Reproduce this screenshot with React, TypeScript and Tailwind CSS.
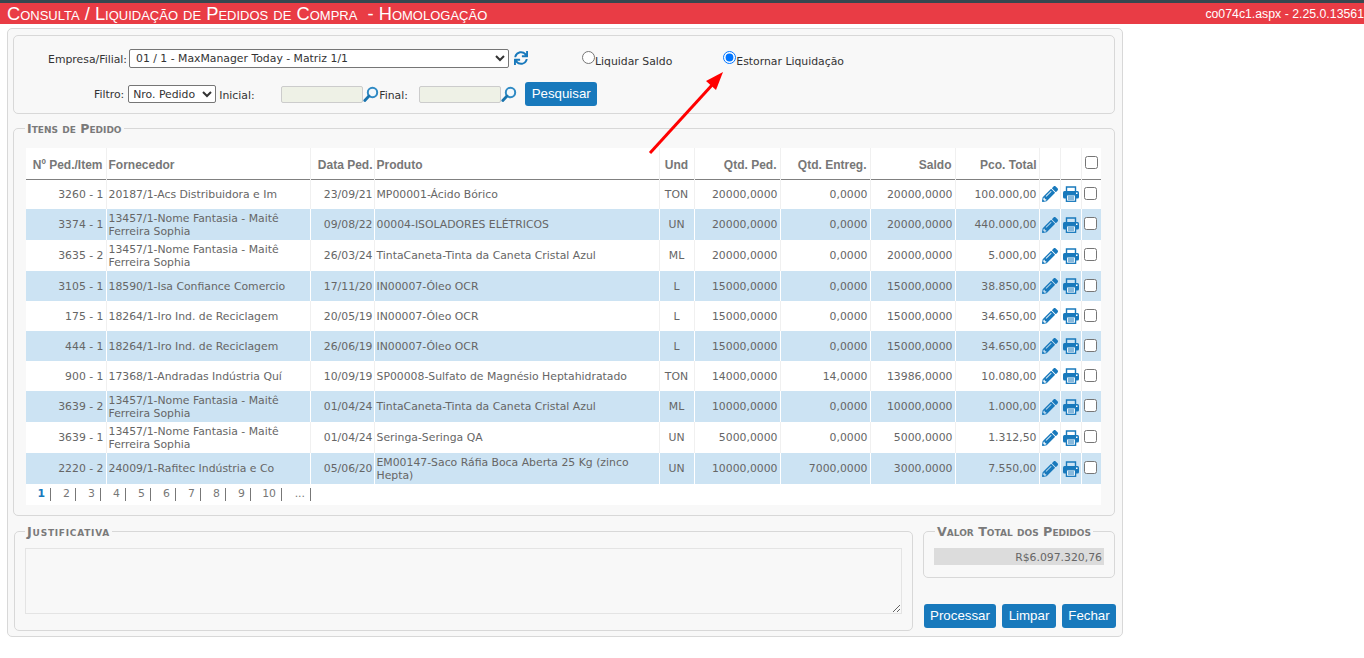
import type { ReactNode } from "react"
import { FaPencilAlt, FaSync } from "react-icons/fa"

// ---------------------------------------------------------------------------
// Data
// ---------------------------------------------------------------------------

interface Item {
  pedido: string
  fornecedor: string
  data: string
  produto: string
  und: string
  qtdPed: string
  qtdEnt: string
  saldo: string
  total: string
}

const NOME_FANTASIA = "13457/1-Nome Fantasia - Maitê Ferreira Sophia"

const ITEMS: Item[] = [
  { pedido: "3260 - 1", fornecedor: "20187/1-Acs Distribuidora e Im", data: "23/09/21", produto: "MP00001-Ácido Bórico", und: "TON", qtdPed: "20000,0000", qtdEnt: "0,0000", saldo: "20000,0000", total: "100.000,00" },
  { pedido: "3374 - 1", fornecedor: NOME_FANTASIA, data: "09/08/22", produto: "00004-ISOLADORES ELÉTRICOS", und: "UN", qtdPed: "20000,0000", qtdEnt: "0,0000", saldo: "20000,0000", total: "440.000,00" },
  { pedido: "3635 - 2", fornecedor: NOME_FANTASIA, data: "26/03/24", produto: "TintaCaneta-Tinta da Caneta Cristal Azul", und: "ML", qtdPed: "20000,0000", qtdEnt: "0,0000", saldo: "20000,0000", total: "5.000,00" },
  { pedido: "3105 - 1", fornecedor: "18590/1-Isa Confiance Comercio", data: "17/11/20", produto: "IN00007-Óleo OCR", und: "L", qtdPed: "15000,0000", qtdEnt: "0,0000", saldo: "15000,0000", total: "38.850,00" },
  { pedido: "175 - 1", fornecedor: "18264/1-Iro Ind. de Reciclagem", data: "20/05/19", produto: "IN00007-Óleo OCR", und: "L", qtdPed: "15000,0000", qtdEnt: "0,0000", saldo: "15000,0000", total: "34.650,00" },
  { pedido: "444 - 1", fornecedor: "18264/1-Iro Ind. de Reciclagem", data: "26/06/19", produto: "IN00007-Óleo OCR", und: "L", qtdPed: "15000,0000", qtdEnt: "0,0000", saldo: "15000,0000", total: "34.650,00" },
  { pedido: "900 - 1", fornecedor: "17368/1-Andradas Indústria Quí", data: "10/09/19", produto: "SP00008-Sulfato de Magnésio Heptahidratado", und: "TON", qtdPed: "14000,0000", qtdEnt: "14,0000", saldo: "13986,0000", total: "10.080,00" },
  { pedido: "3639 - 2", fornecedor: NOME_FANTASIA, data: "01/04/24", produto: "TintaCaneta-Tinta da Caneta Cristal Azul", und: "ML", qtdPed: "10000,0000", qtdEnt: "0,0000", saldo: "10000,0000", total: "1.000,00" },
  { pedido: "3639 - 1", fornecedor: NOME_FANTASIA, data: "01/04/24", produto: "Seringa-Seringa QA", und: "UN", qtdPed: "5000,0000", qtdEnt: "0,0000", saldo: "5000,0000", total: "1.312,50" },
  { pedido: "2220 - 2", fornecedor: "24009/1-Rafitec Indústria e Co", data: "05/06/20", produto: "EM00147-Saco Ráfia Boca Aberta 25 Kg (zinco Hepta)", und: "UN", qtdPed: "10000,0000", qtdEnt: "7000,0000", saldo: "3000,0000", total: "7.550,00" },
]

const PAGES = ["1", "2", "3", "4", "5", "6", "7", "8", "9", "10", "..."]

// ---------------------------------------------------------------------------
// Small parts
// ---------------------------------------------------------------------------

function Lens() {
  return (
    <svg width="16" height="17" viewBox="0 0 16 17" className="shrink-0">
      <circle cx="9.5" cy="6.5" r="4.7" fill="#f2f8fc" stroke="#2f8ac4" strokeWidth="2" />
      <path d="M6 10 L1.8 14.5" stroke="#1873ad" strokeWidth="2.8" strokeLinecap="round" />
    </svg>
  )
}

function PrintIcon() {
  return (
    <svg width="16" height="16" viewBox="0 0 16 16" className="mx-auto block">
      <path d="M3.5 5.5 V1 H12.5 V5.5" fill="none" stroke="#1879bc" strokeWidth="1.4" />
      <rect x="0" y="5" width="16" height="7.5" rx="1.5" fill="#1879bc" />
      <rect x="3.4" y="8.8" width="9.2" height="6.5" fill="#f4f9fc" stroke="#1879bc" strokeWidth="1.3" />
      <path d="M5 11 H11 M5 13 H11" stroke="#1879bc" strokeWidth="1" />
      <rect x="13" y="6.5" width="1.5" height="1.5" fill="#fff" />
    </svg>
  )
}

function Check() {
  return (
    <span className="block h-[13px] w-[13px] rounded-[2.5px] border border-[#767676] bg-white" />
  )
}

function BlueButton({ label, className }: { label: string; className: string }) {
  return (
    <button
      type="button"
      className={`h-[24px] shrink-0 rounded-[3px] bg-[#1879bc] text-[13.3px] text-white font-['Liberation_Sans',sans-serif] ${className}`}
    >
      {label}
    </button>
  )
}

function Legend({ children, className }: { children: ReactNode; className: string }) {
  return (
    <legend className={`px-[2px] leading-[9px] font-bold text-[#7a7a7a] [font-variant:small-caps] ${className}`}>
      {children}
    </legend>
  )
}

const th = "border-r border-[#f0f0f0] px-[3px] pt-[4px] text-[12px] font-bold text-[#777] font-['Liberation_Sans',sans-serif]"
const td = "border-r px-[2px] py-[2px]"

export default function App() {
  return (
    <div className="relative h-[658px] w-[1364px] overflow-hidden bg-white text-[10.85px] text-[#666] font-['DejaVu_Sans',sans-serif]">
      {/* Title bar */}
      <div className="h-[3px] bg-[#37474f]" />
      <div className="flex h-[21px] items-center justify-between bg-[#e93c45] pl-[7px] text-white">
        <span className="text-[18.3px] leading-[19px] whitespace-pre [font-variant:small-caps] font-['Liberation_Sans',sans-serif]">
          Consulta / Liquidação de Pedidos de Compra  - Homologação
        </span>
        <span className="translate-y-[1px] text-[12.3px] whitespace-nowrap font-['Liberation_Sans',sans-serif]">
          co074c1.aspx - 2.25.0.13561
        </span>
      </div>

      {/* Page panel */}
      <div className="ml-[7px] mt-[4px] flex h-[609px] w-[1116px] flex-col rounded-[5px] border border-[#d8d8d8] bg-[#f8f8f8] pl-[5px] pr-[7px] pt-[6px]">
        {/* Search form */}
        <div className="h-[79px] rounded-[5px] border border-[#d8d8d8] text-[#333]">
          <div className="flex h-[32px] items-end">
            <span className="ml-[31px] w-[82px] text-right">Empresa/Filial:</span>
            <select className="ml-[2px] h-[19px] w-[380px] rounded-[2px] border border-[#767676] bg-white pl-[2px] text-[10.85px] text-[#333]">
              <option>01 / 1 - MaxManager Today - Matriz 1/1</option>
            </select>
            <FaSync className="mb-[3px] ml-[5px] text-[14px] text-[#1879bc]" />
            <label className="ml-[54px] flex items-center">
              <input type="radio" name="modo" className="m-0 h-[13px] w-[13px] -translate-y-[2px]" />
              <span className="translate-y-[2px]">Liquidar Saldo</span>
            </label>
            <label className="ml-[51px] flex items-center">
              <input type="radio" name="modo" defaultChecked className="m-0 h-[13px] w-[13px] -translate-y-[2px]" />
              <span className="translate-y-[2px]">Estornar Liquidação</span>
            </label>
          </div>
          <div className="mt-[14px] flex h-[24px] items-center">
            <span className="ml-[80px] translate-y-[1px]">Filtro:</span>
            <select className="ml-[4px] h-[18px] w-[88px] rounded-[2px] border border-[#767676] bg-white pl-0 text-[10.85px] text-[#333]">
              <option>Nro. Pedido</option>
            </select>
            <span className="ml-[3px] w-[62px] translate-y-[2px]">Inicial:</span>
            <input className="h-[17px] w-[82px] rounded-[2px] border border-[#ccc] bg-[#eef1e6]" />
            <Lens />
            <span className="w-[40px] translate-y-[2px]">Final:</span>
            <input className="h-[17px] w-[82px] rounded-[2px] border border-[#ccc] bg-[#eef1e6]" />
            <Lens />
            <BlueButton label="Pesquisar" className="ml-[8px] w-[72px]" />
          </div>
        </div>

        {/* Items */}
        <fieldset className="mt-[10px] h-[392px] rounded-[5px] border border-[#d8d8d8] pl-[12px] pr-[13px]">
          <Legend className="-ml-[1px] text-[12.5px]">Itens de Pedido</Legend>
          <div className="mt-[15px] bg-white">
            <table className="w-[1075px] table-fixed border-collapse">
              <colgroup>
                <col className="w-[80px]" />
                <col className="w-[204px]" />
                <col className="w-[64px]" />
                <col className="w-[285px]" />
                <col className="w-[35px]" />
                <col className="w-[86px]" />
                <col className="w-[90px]" />
                <col className="w-[85px]" />
                <col className="w-[84px]" />
                <col className="w-[21px]" />
                <col className="w-[21px]" />
                <col className="w-[20px]" />
              </colgroup>
              <thead>
                <tr className="h-[31px] border-b border-[#808080]">
                  <th className={`${th} text-right`}>Nº Ped./Item</th>
                  <th className={`${th} text-left !px-[2px]`}>Fornecedor</th>
                  <th className={`${th} text-right !pr-[1px]`}>Data Ped.</th>
                  <th className={`${th} text-left !px-[2px]`}>Produto</th>
                  <th className={`${th} text-center`}>Und</th>
                  <th className={`${th} text-right`}>Qtd. Ped.</th>
                  <th className={`${th} text-right`}>Qtd. Entreg.</th>
                  <th className={`${th} text-right`}>Saldo</th>
                  <th className={`${th} text-right !pr-[2px]`}>Pco. Total</th>
                  <th className={th} />
                  <th className={th} />
                  <th className="pb-[2px] pl-[3px]"><Check /></th>
                </tr>
              </thead>
              <tbody className="leading-[13px]">
                {ITEMS.map((item, i) => {
                  const divider = i % 2 === 1 ? "border-white" : "border-[#f0f0f0]"
                  const alta = item.fornecedor === NOME_FANTASIA || item.produto.length > 45
                  return (
                    <tr
                      key={i}
                      className={`${alta ? "h-[31px]" : "h-[30px]"} ${i % 2 === 1 ? "bg-[#cce3f3]" : "bg-white"}`}
                    >
                      <td className={`${td} ${divider} text-right`}>{item.pedido}</td>
                      <td className={`${td} ${divider}`}>{item.fornecedor}</td>
                      <td className={`${td} ${divider} text-right !pr-[1px]`}>{item.data}</td>
                      <td className={`${td} ${divider}`}>{item.produto}</td>
                      <td className={`${td} ${divider} text-center`}>{item.und}</td>
                      <td className={`${td} ${divider} text-right`}>{item.qtdPed}</td>
                      <td className={`${td} ${divider} text-right`}>{item.qtdEnt}</td>
                      <td className={`${td} ${divider} text-right`}>{item.saldo}</td>
                      <td className={`${td} ${divider} text-right`}>{item.total}</td>
                      <td className={`${td} ${divider}`}><FaPencilAlt className="mx-auto text-[16px] text-[#1879bc]" /></td>
                      <td className={`${td} ${divider}`}><PrintIcon /></td>
                      <td className="px-[2px] pb-[2px]"><Check /></td>
                    </tr>
                  )
                })}
              </tbody>
            </table>
            {/* Pagination */}
            <div className="flex h-[21px] items-center text-[#777]">
              {PAGES.map((page, i) => (
                <span
                  key={page}
                  className={`flex h-[13px] items-center justify-end border-r border-[#777] pr-[5px] ${page === "10" ? "w-[31px]" : page === "..." ? "w-[29px]" : i === 0 ? "w-[25px] font-bold text-[#1879bc]" : "w-[25px]"}`}
                >
                  {page}
                </span>
              ))}
            </div>
          </div>
        </fieldset>

        {/* Bottom area */}
        <div className="mt-[11px] flex">
          <fieldset className="ml-[1px] h-[104px] w-[899px] rounded-[5px] border border-[#d8d8d8] px-[10px]">
            <Legend className="ml-0 text-[13px] tracking-[0.75px]">Justificativa</Legend>
            <textarea className="mt-[12px] block h-[66px] w-[877px] border border-[#e4e4e4] bg-[#f8f8f8]" />
          </fieldset>
          <div className="ml-[10px] w-[192px]">
            <fieldset className="h-[51px] rounded-[5px] border border-[#d8d8d8] px-[10px]">
              <Legend className="ml-[1px] text-[12.7px]">Valor Total dos Pedidos</Legend>
              <div className="mt-[12px] h-[17px] w-[170px] bg-[#dcdcdc] pr-[2px] text-right leading-[19px]">
                R$6.097.320,76
              </div>
            </fieldset>
            <div className="mt-[26px] flex gap-[6px] pl-[1px]">
              <BlueButton label="Processar" className="w-[72px]" />
              <BlueButton label="Limpar" className="w-[54px]" />
              <BlueButton label="Fechar" className="w-[54px]" />
            </div>
          </div>
        </div>
      </div>

      {/* Annotation arrow drawn over the page */}
      <svg className="absolute left-[640px] top-[65px]" width="90" height="95" viewBox="640 65 90 95">
        <path d="M650 153 L713 84" stroke="#ff0000" strokeWidth="3" fill="none" />
        <path d="M723 72 L716 90 L706 81 Z" fill="#ff0000" />
      </svg>
    </div>
  )
}
